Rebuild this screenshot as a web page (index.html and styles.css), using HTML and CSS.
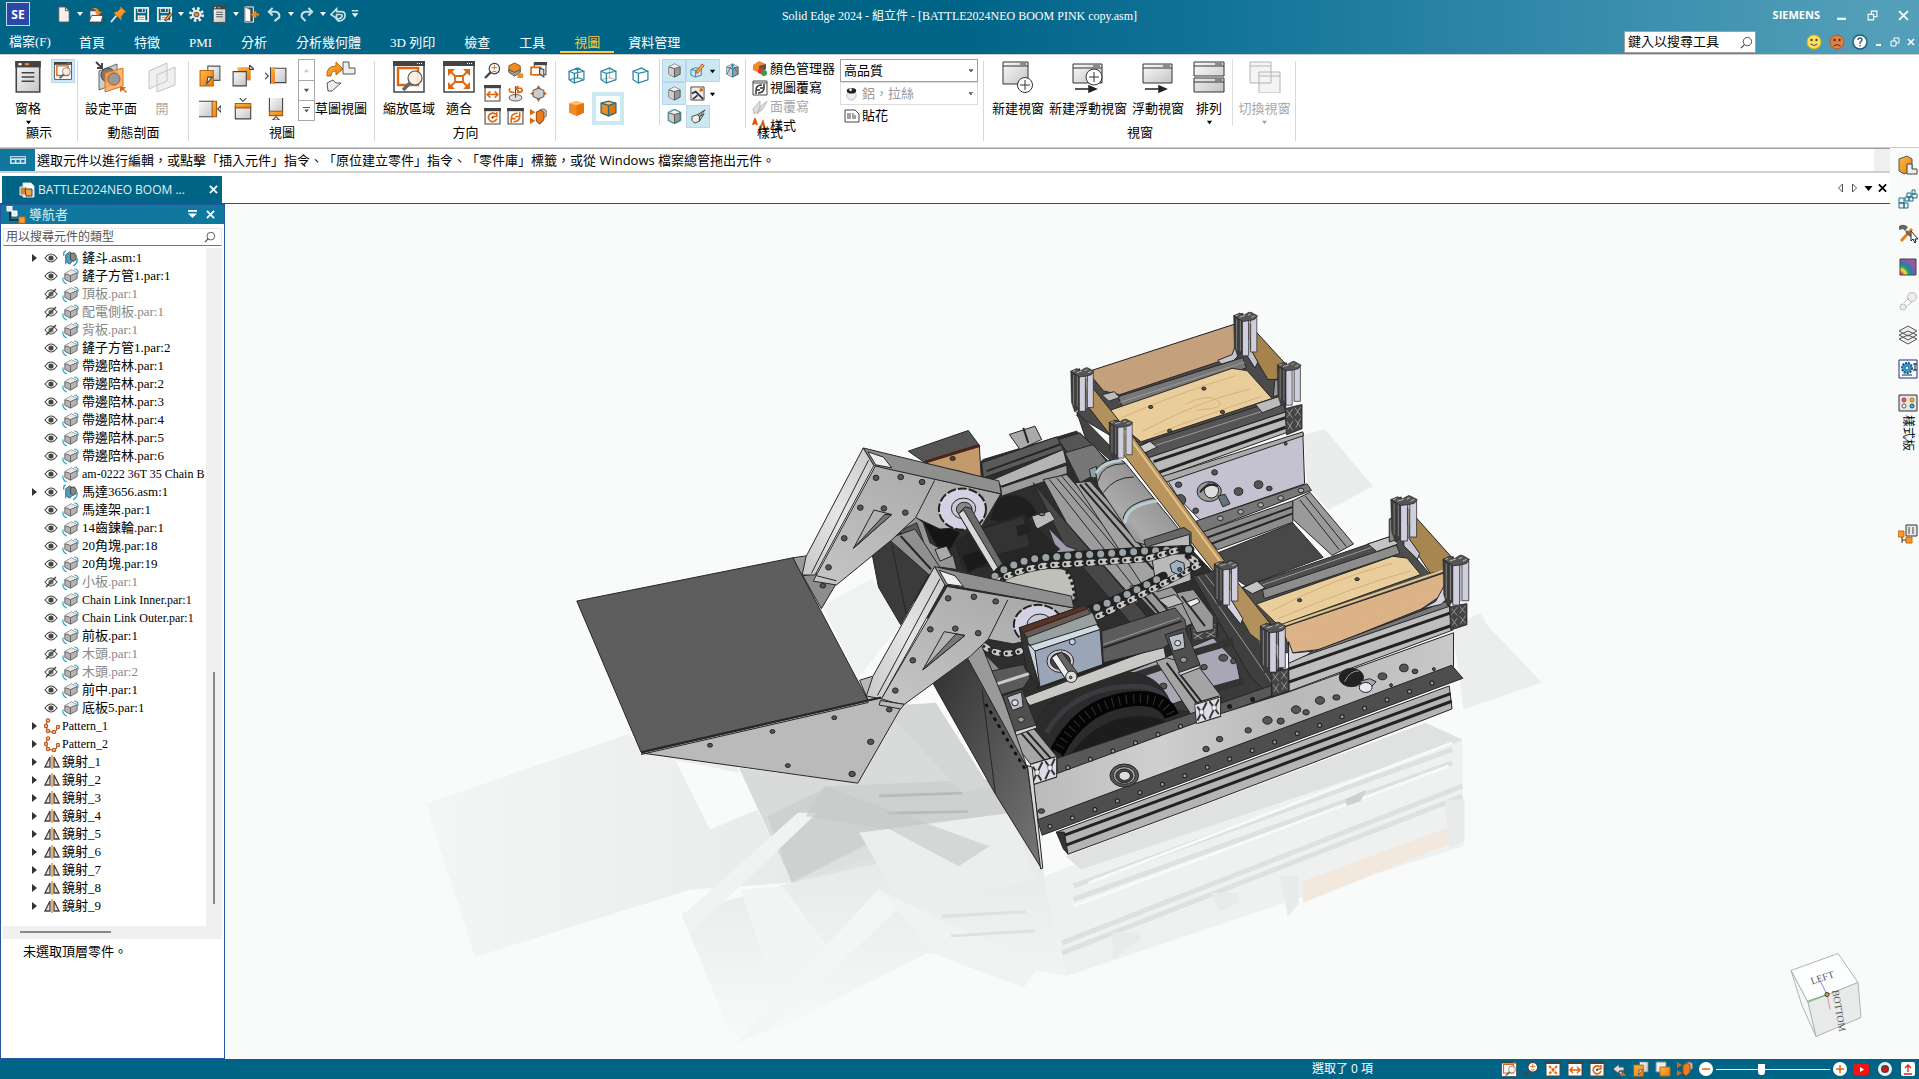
FILE: index.html
```
<!DOCTYPE html>
<html lang="zh-Hant">
<head>
<meta charset="UTF-8">
<meta name="viewport" content="width=device-width, initial-scale=1.0">
<title>Solid Edge 2024 - 組立件</title>
<link rel="stylesheet" href="styles.css">
</head>
<body>

<!-- shared icons -->
<svg class="defs" width="0" height="0">
    <defs>
        <linearGradient id="gOrange" x1="0" y1="0" x2="1" y2="1"><stop offset="0" stop-color="#ffb84a"/><stop offset="1" stop-color="#e87d0d"/></linearGradient>
        <linearGradient id="gGrey" x1="0" y1="0" x2="1" y2="1"><stop offset="0" stop-color="#fafafa"/><stop offset="1" stop-color="#c4c4c4"/></linearGradient>
        <linearGradient id="gFace" x1="0" y1="0" x2="1" y2="0"><stop offset="0" stop-color="#bababa"/><stop offset=".3" stop-color="#cfcfcf"/><stop offset=".6" stop-color="#b8b8b8"/><stop offset="1" stop-color="#c8c8c8"/></linearGradient>
        <linearGradient id="gArm" x1="0" y1="1" x2="1" y2="0"><stop offset="0" stop-color="#c6c6c6"/><stop offset="1" stop-color="#a4a4a4"/></linearGradient>
        <linearGradient id="gEdge" x1="0" y1="1" x2="1" y2="0"><stop offset="0" stop-color="#c8c8c8"/><stop offset=".5" stop-color="#e6e6e6"/><stop offset="1" stop-color="#cacaca"/></linearGradient>
        <linearGradient id="gDark" x1="0" y1="0" x2="1" y2="1"><stop offset="0" stop-color="#303030"/><stop offset="1" stop-color="#777"/></linearGradient>
        <linearGradient id="gMotor" x1="0" y1="1" x2="1" y2="0"><stop offset="0" stop-color="#555"/><stop offset=".35" stop-color="#aaa"/><stop offset=".6" stop-color="#999"/><stop offset="1" stop-color="#4c4c4c"/></linearGradient>
        <linearGradient id="gFade" x1="0" y1="0" x2="0" y2="1"><stop offset="0" stop-color="#dfe1e1"/><stop offset="1" stop-color="#f9fbfb"/></linearGradient>
        <linearGradient id="gFloor" x1="0" y1="0" x2="1" y2="0"><stop offset="0" stop-color="#f4f6f6"/><stop offset="1" stop-color="#e9ebeb"/></linearGradient>
        <radialGradient id="gHeat" cx="0" cy="1" r="1"><stop offset=".1" stop-color="#e33"/><stop offset=".35" stop-color="#fd4"/><stop offset=".55" stop-color="#2a9d5c"/><stop offset=".75" stop-color="#2a78c0"/><stop offset="1" stop-color="#945a9c"/></radialGradient>
    </defs>
    <symbol id="caret" viewBox="0 0 8 8"><path d="M1 2h6L4 6z" fill="currentColor"/></symbol>
    <symbol id="new" viewBox="0 0 18 18"><path d="M4 1h7l4 4v12H4z" fill="#f4f1ee" stroke="#555"/><path d="M11 1v4h4" fill="none" stroke="#555"/></symbol>
    <symbol id="open" viewBox="0 0 18 18"><path d="M3 17V5h8v4h5v8z" fill="#f4f1ee" stroke="#444"/><path d="M2 17l3-7h12l-2 7z" fill="#fff" stroke="#444"/><path d="M5 3q6-3 8 3h3l-4 4-4-4h2q-1-3-5-3z" fill="#f08a24"/></symbol>
    <symbol id="pin" viewBox="0 0 18 18"><path d="M1 17l6-7" stroke="#ddd" stroke-width="2"/><path d="M11 1l6 5-2 1-3 4v4L4 7l4-1 3-3z" fill="url(#gOrange)" stroke="#c46a10"/></symbol>
    <symbol id="save" viewBox="0 0 18 18"><path d="M2 2h14v14H2z" fill="none" stroke="#f1e9e2" stroke-width="2"/><path d="M5 2h8v5H5zM10 3v3" fill="none" stroke="#f1e9e2"/><path d="M5 10h8v6H5z" fill="#fff"/><path d="M6 12h6M6 14h6" stroke="#e87d0d"/></symbol>
    <symbol id="saveas" viewBox="0 0 18 18"><use href="#save"/><path d="M9 15l6-8 2 2-6 7z" fill="#f3a33a" stroke="#333"/></symbol>
    <symbol id="gear" viewBox="0 0 18 18"><circle cx="9" cy="9" r="6" fill="none" stroke="#eee" stroke-width="4" stroke-dasharray="2.4 2.3"/><circle cx="9" cy="9" r="4" fill="#555" stroke="#eee" stroke-width="2"/><circle cx="9" cy="9" r="2" fill="#f08a24"/></symbol>
    <symbol id="pane" viewBox="0 0 24 30"><path d="M1 1h22v28H1z" fill="url(#gGrey)" stroke="#444" stroke-width="1.5"/><path d="M0 0h24v6H0z" fill="#444"/><path d="M3 2h3v2H3z" fill="#fff"/><path d="M9 2h4v2H9z" fill="#f08a24"/><path d="M6 11h12M6 15h12M6 19h12" stroke="#444" stroke-width="1.5"/></symbol>
    <symbol id="exit" viewBox="0 0 18 18"><path d="M2 1h9v16H2z" fill="#444" stroke="#fff"/><path d="M2 1l6 3v13l-6-1z" fill="#fff" stroke="#777"/><path d="M17 9h-6m3-3l-4 3 4 3" fill="none" stroke="#f08a24" stroke-width="2"/></symbol>
    <symbol id="undo" viewBox="0 0 18 18"><path d="M3 6h7q5 1 4 6l-5 4M7 2L3 6l4 4" fill="none" stroke="#c8dde6" stroke-width="2.2"/></symbol>
    <symbol id="redo" viewBox="0 0 18 18"><path d="M15 6H8q-5 1-4 6l4 4M11 2l4 4-4 4" fill="none" stroke="#c8dde6" stroke-width="2.2"/></symbol>
    <symbol id="both" viewBox="0 0 18 18"><path d="M1 9l6-6v3h5q4 0 4 4 0 5-7 6l-2-2q6-1 6-4 0-1-2-1H7v4z" fill="none" stroke="#c8dde6" stroke-width="1.8"/></symbol>
    <symbol id="more" viewBox="0 0 8 10"><path d="M0 1h8" stroke="#fff" stroke-width="1.5"/><path d="M0 4h8L4 9z" fill="#fff"/></symbol>
    <symbol id="lens" viewBox="0 0 18 18"><circle cx="11" cy="7" r="5.500" fill="#fff" stroke="#444" stroke-width="1.3"/><path d="M7 11l-6 6" stroke="#444" stroke-width="2.4"/></symbol>
    <symbol id="find" viewBox="0 0 14 14"><circle cx="8" cy="6" r="4.500" fill="none" stroke="#444"/><path d="M5 9l-4 4" stroke="#444" stroke-width="1.3"/></symbol>
    <symbol id="winlens" viewBox="0 0 32 32"><path d="M1 1h30v30H1z" fill="#fff" stroke="#444" stroke-width="1.5"/><path d="M0 0h32v5H0z" fill="#444"/><path d="M24 2.500h5" stroke="#fff" stroke-dasharray="1 1"/><path d="M5 7h20v17H5z" fill="#fff" stroke="#e0660c" stroke-width="2.4"/><circle cx="22" cy="17" r="7" fill="#fdeee2" fill-opacity=".9" stroke="#555" stroke-width="1.2"/><path d="M17 22l-7 7" stroke="#666" stroke-width="3.500"/></symbol>
    <symbol id="fit" viewBox="0 0 32 32"><path d="M1 1h30v30H1z" fill="#fff" stroke="#444" stroke-width="1.5"/><path d="M0 0h32v5H0z" fill="#444"/><path d="M24 2.500h5" stroke="#fff" stroke-dasharray="1 1"/><path d="M12 15h8v6h-8zM12 15l-6-6M20 15l6-6M12 21l-6 6M20 21l6 6" fill="none" stroke="#e0660c" stroke-width="1.8"/><path d="M5 8h7l-7 7zM27 8h-7l7 7zM5 28h7l-7-7zM27 28h-7l7-7z" fill="#e0660c"/></symbol>
    <symbol id="zoom" viewBox="0 0 18 18"><use href="#lens"/><path d="M8 6h6M11 3v5M9 10h4" stroke="#e0660c"/></symbol>
    <symbol id="pan" viewBox="0 0 16 16"><path d="M1 1h14v14H1z" fill="#fff" stroke="#444"/><path d="M0 0h16v3H0z" fill="#444"/><path d="M3 9h10M6 6L3 9l3 3M10 6l3 3-3 3" fill="none" stroke="#e0660c" stroke-width="1.5"/></symbol>
    <symbol id="rot" viewBox="0 0 16 16"><path d="M1 1h14v14H1z" fill="#fff" stroke="#444"/><path d="M0 0h16v3H0z" fill="#444"/><path d="M11 6a4 4 0 1 0 1 4M12 4v4H8" fill="none" stroke="#e0660c" stroke-width="1.6"/><circle cx="8" cy="9" r="1" fill="#333"/></symbol>
    <symbol id="refresh" viewBox="0 0 16 16"><path d="M1 1h14v14H1z" fill="#fff" stroke="#444"/><path d="M0 0h16v3H0z" fill="#444"/><path d="M4 9q1-4 6-4M12 9q-1 4-6 4M12 4v4H8M4 14v-4h4" fill="none" stroke="#e0660c" stroke-width="1.5"/></symbol>
    <symbol id="override" viewBox="0 0 16 16"><path d="M1 1h14v14H1z" fill="#fff" stroke="#444"/><path d="M1 3h14" stroke="#444"/><path d="M4 9q1-4 6-4M12 9q-1 4-6 4M12 4v4H8M4 14v-4h4" fill="none" stroke="#333" stroke-width="1.5"/></symbol>
    <symbol id="smallfit" viewBox="0 0 16 16"><path d="M1 1h14v14H1z" fill="#fff" stroke="#444"/><path d="M0 0h16v3H0z" fill="#444"/><path d="M4 5l8 8M12 5l-8 8" stroke="#e0660c" stroke-width="2" stroke-dasharray="3 1"/></symbol>
    <symbol id="cube" viewBox="0 0 16 16"><path d="M2 4l6-3 6 3v8l-6 3-6-3z" fill="#999" stroke="#555"/><path d="M2 4l6-3 6 3-6 2z" fill="#eee"/><path d="M8 6v9l-6-3V4z" fill="#ccc"/><path d="M2 4l6 2 6-2M8 6v9" fill="none" stroke="#555"/></symbol>
    <symbol id="cubeglow" viewBox="0 0 16 16"><path d="M2 4l6-3 6 3v8l-6 3-6-3z" fill="none" stroke="#4cc4e4" stroke-width="3"/><use href="#cube"/></symbol>
    <symbol id="cubex" viewBox="0 0 16 16"><use href="#cube"/><path d="M2 12l6-11 6 11M8 1v14" fill="none" stroke="#2d86a6"/></symbol>
    <symbol id="cubetilt" viewBox="0 0 16 16"><path d="M1 8l6-2 2 2v5l-5 2-3-3z" fill="#eee" stroke="#444"/><path d="M7 6l8-5-6 7zM9 8l5-3-5 8z" fill="#bbb" stroke="#444"/></symbol>
    <symbol id="cubewire" viewBox="0 0 16 16"><path d="M1 4l5 2v9l-5-3zM6 6l9-2v8l-9 3M1 4l8-3 6 3M1 12l8-2 6 2M9 1v9" fill="none" stroke="#2d86a6" stroke-width="1.2"/></symbol>
    <symbol id="cubehid" viewBox="0 0 16 16"><path d="M9 1v9l6 2M9 10l-8 2" fill="none" stroke="#bbb"/><path d="M1 4l5 2v9l-5-3zM6 6l9-2v8l-9 3M1 4l8-3 6 3" fill="none" stroke="#2d86a6" stroke-width="1.2"/></symbol>
    <symbol id="cubeout" viewBox="0 0 16 16"><path d="M1 4l5 2v9l-5-3zM6 6l9-2v8l-9 3M1 4l8-3 6 3" fill="#fff" stroke="#2d86a6" stroke-width="1.2"/></symbol>
    <symbol id="cubeor" viewBox="0 0 16 16"><path d="M1 3l7-2 7 2v9l-7 3-7-3z" fill="#f08a24"/><path d="M1 3l7-2 7 2-7 2z" fill="#ffc266"/><path d="M8 5v10l7-3V3z" fill="#e0760c"/></symbol>
    <symbol id="cubeedge" viewBox="0 0 16 16"><use href="#cubeor"/><path d="M1 3l7-2 7 2v9l-7 3-7-3zM1 3l7 2 7-2M8 5v10" fill="none" stroke="#2d6b7c" stroke-width="1.2"/></symbol>
    <symbol id="cubeor2" viewBox="0 0 18 18"><path d="M2 4l6-3 6 3v6l-6 3-6-3z" fill="#f08a24" stroke="#8a5a20"/><path d="M2 8l6 3 6-3v3l-6 4-6-4z" fill="#999" stroke="#555"/><path d="M11 12h6v5h-6z" fill="#f08a24"/></symbol>
    <symbol id="wincopy" viewBox="0 0 16 16"><path d="M4 1h11v11H4z" fill="#fff" stroke="#444"/><path d="M4 0h12v3H4z" fill="#444"/><path d="M1 5h9v7H1z" fill="#fff" stroke="#e0660c" stroke-width="1.6"/><path d="M9 6l4 1v7l-4-3z" fill="#ddd" stroke="#444"/></symbol>
    <symbol id="spin" viewBox="0 0 16 16"><ellipse cx="8" cy="12" rx="6" ry="3" fill="#ddd" stroke="#666"/><path d="M8 1v11" stroke="#444"/><path d="M3 3q-3 4 4 4M9 7q8 0 4-4H9M11 1L8 3l3 3" fill="none" stroke="#e0660c" stroke-width="1.5"/></symbol>
    <symbol id="look" viewBox="0 0 16 16"><path d="M8 0l2 3H6zM8 16l2-3H6zM0 8l3-2v4zM16 8l-3-2v4z" fill="#e0660c"/><path d="M3 5l5-2 5 2v6l-5 2-5-2z" fill="#ccc" stroke="#666"/></symbol>
    <symbol id="persp" viewBox="0 0 16 16"><path d="M0 1l5 3-5 3zM0 9l5 3-5 3z" fill="#e0660c"/><circle cx="12" cy="5" r="4" fill="#bbb" stroke="#777"/><path d="M6 4l4-2 3 2v7l-4 4-3-3z" fill="#ee7b1e" stroke="#9a5316"/></symbol>
    <symbol id="v1" viewBox="0 0 20 20"><path d="M8 1h11v13H8z" fill="url(#gGrey)" stroke="#555"/><path d="M1 5h12v14H1z" fill="url(#gOrange)" stroke="#b9660e"/><path d="M8 11h4l-5 6z" fill="#fff" stroke="#444"/></symbol>
    <symbol id="v2" viewBox="0 0 20 20"><path d="M5 2h12v12H5z" fill="url(#gOrange)"/><path d="M1 6h12v13H1z" fill="url(#gGrey)" stroke="#444"/><path d="M16 0l4 4h-4z" fill="#fff" stroke="#444"/></symbol>
    <symbol id="v3" viewBox="0 0 20 20"><path d="M7 3h12v13H7z" fill="url(#gGrey)" stroke="#444"/><path d="M5 2h4v15H5z" fill="url(#gOrange)"/><path d="M5 2v15M0 7l3 3-3 3" fill="none" stroke="#444"/></symbol>
    <symbol id="v4" viewBox="0 0 20 20"><path d="M0 3h13v14H0z" fill="url(#gGrey)"/><path d="M0 3h13M0 17h13" stroke="#444"/><path d="M12 3h4v14h-4z" fill="url(#gOrange)" stroke="#a35c10"/><path d="M20 7l-3 3 3 3z" fill="#fff" stroke="#444"/></symbol>
    <symbol id="v5" viewBox="0 0 20 20"><path d="M3 8h14v11H3z" fill="url(#gGrey)" stroke="#444"/><path d="M3 5h14v4H3z" fill="url(#gOrange)" stroke="#a35c10"/><path d="M7 0l3 3 3-3" fill="none" stroke="#444"/></symbol>
    <symbol id="v6" viewBox="0 0 20 20"><path d="M4 0h12v13H4z" fill="url(#gGrey)"/><path d="M4 0v13M16 0v13" stroke="#444"/><path d="M4 12h12v4H4z" fill="url(#gOrange)" stroke="#a35c10"/><path d="M7 20l3-3 3 3z" fill="#fff" stroke="#444"/></symbol>
    <symbol id="draft" viewBox="0 0 32 32"><path d="M2 15Q1 5 11 5V1l7 7-7 6v-4q-5 0-5 5z" fill="url(#gOrange)" stroke="#b9660e"/><path d="M18 1h6v6h6v6H18zM2 22l6-3 3 3h5l-9 8H3z" fill="#eee" stroke="#555"/></symbol>
    <symbol id="setplane" viewBox="0 0 32 32"><path d="M4 10l18-7v19L4 29z" fill="#ccc" stroke="#666"/><circle cx="13" cy="14" r="7" fill="#777" stroke="#444"/><path d="M10 12l18-5v18l-18 6z" fill="#f6a860" fill-opacity=".85" stroke="#e0760c"/><circle cx="19" cy="18" r="6" fill="#999" stroke="#ae5a10"/><path d="M1 1l5 5M7 2v5H2" fill="none" stroke="#444" stroke-width="2"/><path d="M25 26h6l-2 2 3 3-1 1-3-3-3 2z" fill="#e0660c"/></symbol>
    <symbol id="planeoff" viewBox="0 0 32 32"><path d="M3 10l18-8v18L3 28zM11 14l18-8v18l-18 7z" fill="#efefef" stroke="#c4c4c4"/></symbol>
    <symbol id="winadd" viewBox="0 0 32 32"><path d="M1 1h25v22H1z" fill="url(#gGrey)" stroke="#333"/><path d="M1 5h25M18 3h6" stroke="#333"/><circle cx="23" cy="24" r="7.500" fill="#fff" stroke="#333"/><path d="M18 24h10M23 19v10" stroke="#333"/></symbol>
    <symbol id="winaddf" viewBox="0 0 32 32"><path d="M1 3h29v19H1z" fill="url(#gGrey)" stroke="#333"/><path d="M1 7h29M21 5h7" stroke="#333"/><circle cx="22" cy="16" r="8" fill="#fff" stroke="#333"/><path d="M17 16h10M22 11v10" stroke="#333"/><path d="M3 28h17M17 25l7 3-7 3z" fill="#222" stroke="#222" stroke-width="1.5"/></symbol>
    <symbol id="winfloat" viewBox="0 0 32 32"><path d="M1 3h29v19H1z" fill="url(#gGrey)" stroke="#333"/><path d="M1 7h29M21 5h7" stroke="#333"/><path d="M3 28h17M17 25l7 3-7 3z" fill="#222" stroke="#222" stroke-width="1.5"/></symbol>
    <symbol id="tile" viewBox="0 0 32 32"><path d="M1 1h30v14H1zM1 17h30v14H1z" fill="url(#gGrey)" stroke="#333"/><path d="M1 5h30M1 21h30M22 3h7M22 19h7" stroke="#333"/></symbol>
    <symbol id="cascade" viewBox="0 0 32 32"><path d="M1 1h21v21H1zM10 11h21v21H10z" fill="#f4f4f4" stroke="#b4b4b4"/><path d="M1 5h21M10 15h21" stroke="#b4b4b4"/></symbol>
    <symbol id="paint" viewBox="0 0 16 16"><path d="M1 7l5-2 6 1v7l-6 2-5-2zM6 8v7M1 7l5 1 6-2" fill="none" stroke="#2d86a6"/><path d="M6 10L13 1l2 2-7 8z" fill="#f3c23a" stroke="#c33"/></symbol>
    <symbol id="scene" viewBox="0 0 16 16"><path d="M1 1h14v14H1z" fill="#eee" stroke="#444"/><path d="M2 8l4-2 3 3 5 5M3 14l5-4" stroke="#333" stroke-width="2" fill="none"/><circle cx="12" cy="4" r="2" fill="#e0660c"/></symbol>
    <symbol id="palette" viewBox="0 0 16 16"><path d="M1 4l6-4 7 3v5l-7 4-6-3z" fill="#f08a24"/><path d="M7 5v7l7-4V3z" fill="#555"/><circle cx="9" cy="10" r="3" fill="#d33"/><circle cx="12" cy="12" r="3" fill="#3a9d4c"/></symbol>
    <symbol id="brush" viewBox="0 0 16 16"><path d="M1 10l7-8v9l-6 4zM8 8l7-6-4 8-6 5z" fill="#ddd" stroke="#bbb"/></symbol>
    <symbol id="styleA" viewBox="0 0 16 16"><path d="M6 15l5-11 3 11M7 11h6M1 7l2-6 2 6M2 5h3" fill="none" stroke="#e0560c" stroke-width="2"/></symbol>
    <symbol id="decal" viewBox="0 0 16 14"><path d="M1 1h10l4 4v8H1z" fill="#fff" stroke="#444"/><path d="M4 4v6M6 4v6M9 4v6M11 6v4" stroke="#444"/></symbol>
    <symbol id="mat" viewBox="0 0 16 16"><circle cx="8" cy="10" r="5" fill="#eee" stroke="#bbb"/><ellipse cx="8" cy="5" rx="5" ry="3" fill="#222"/><circle cx="7" cy="4" r="1.500" fill="#eee"/></symbol>
    <symbol id="eye" viewBox="0 0 14 12"><path d="M1 6q6-8 12 0-6 8-12 0z" fill="#fff" stroke="#444" stroke-width="1.2"/><circle cx="7" cy="6" r="2.600" fill="#444"/></symbol>
    <symbol id="eyeoff" viewBox="0 0 14 12"><path d="M1 6q6-8 12 0-6 8-12 0z" fill="#fff" stroke="#555" stroke-width="1.2"/><circle cx="7" cy="6" r="2.600" fill="#777"/><path d="M2 11L12 1" stroke="#444" stroke-width="1.5"/></symbol>
    <symbol id="part" viewBox="0 0 18 18"><path d="M3 6l7-4 6 3v6l-7 4-6-3z" fill="#b4b4b4" stroke="#666"/><path d="M3 6l7-4 6 3-7 3z" fill="#e8e8e8"/><path d="M9 8v7M3 6l6 2 7-3" fill="none" stroke="#666"/><path d="M1 10v3q1 3 4 4M13 1q3 0 4 3v2" fill="none" stroke="#19a5c8" stroke-width="1.2"/></symbol>
    <symbol id="asm" viewBox="0 0 18 18"><path d="M4 5l4-3 3 2v8l-3 3-4-3z" fill="#4b9fc0" stroke="#555"/><path d="M9 4l4-1 2 3v4l-3 2-3-2z" fill="#888" stroke="#444"/><path d="M4 1Q1 2 2 6M16 9q1 4-4 8M4 11v4" fill="none" stroke="#19a5c8" stroke-width="1.5"/></symbol>
    <symbol id="pattern" viewBox="0 0 16 16"><path d="M4 2Q1 6 3 11q4 5 9 2l2-5" fill="none" stroke="#555"/><g fill="#f6c58c" stroke="#c9571a" stroke-width="1.2"><circle cx="4" cy="2.500" r="1.700"/><circle cx="2" cy="8" r="1.700"/><circle cx="4" cy="13" r="1.700"/><circle cx="10" cy="14" r="1.700"/><circle cx="14" cy="9" r="1.700"/></g></symbol>
    <symbol id="mirror" viewBox="0 0 16 16"><path d="M6 3v10H1zM10 3v10h5z" fill="#e4e4e4" stroke="#444" stroke-width="1.3"/><path d="M8 1v14" stroke="#e0760c" stroke-width="1.2"/></symbol>
    <symbol id="tree" viewBox="0 0 20 18"><path d="M4 5v9h10M4 8h5" fill="none" stroke="#222" stroke-width="1.5"/><path d="M1 0h5v5H1zM6 5h5v5H6z" fill="#e8eef0" stroke="#fff"/><path d="M13 11h6v6h-6z" fill="#f6a23a" stroke="#e0660c"/></symbol>
    <symbol id="asmdoc" viewBox="0 0 16 16"><path d="M4 1h8l3 3v11H4z" fill="#fff" stroke="#ddd"/><path d="M1 5h7v8H1z" fill="#c98a3a" stroke="#eee"/><path d="M6 7h7v7H7z" fill="#f6a23a" stroke="#345"/></symbol>
    <symbol id="post" viewBox="0 0 75 130" preserveAspectRatio="none"><path d="M2 12L30 4V118L14 130 4 100z" fill="#3c3c3c" stroke="#222"/><path d="M28 22h18v105H28zM52 16h18v100H52z" fill="#cfcedd" stroke="#222" stroke-width="2"/><path d="M22 24v90M49 20v98M11 22v88" stroke="#999" stroke-width="2"/><path d="M2 12L20 4l12 6L50 0l22 12-8 10-16 4-20 2z" fill="#555" stroke="#222" stroke-width="2"/><path d="M8 12l8-3M20 16l16-5M44 10l8-3M54 16l10-4" stroke="#ddd" stroke-width="2"/></symbol>
    <symbol id="exend" viewBox="0 0 60 50" preserveAspectRatio="none"><path d="M0 14L56 0v36L4 50z" fill="#dcdbe6" stroke="#222" stroke-width="2"/><path d="M6 18l18 24M26 10L6 44M32 8l20 24M52 4L32 40" stroke="#333" stroke-width="4"/><circle cx="15" cy="28" r="5" fill="#eee" stroke="#222"/><circle cx="42" cy="20" r="5" fill="#eee" stroke="#222"/></symbol>
    <symbol id="exdark" viewBox="0 0 50 70" preserveAspectRatio="none"><path d="M0 10L48 0v56L4 70z" fill="#444" stroke="#222" stroke-width="2"/><path d="M6 14l16 18M22 10L6 30M28 8l16 18M44 6L28 26M6 40l16 20M22 38L8 58M28 34l16 18M44 32L30 54" stroke="#aaa" stroke-width="2"/></symbol>
</svg>

<header class="titlebar">
    <div class="quick">
        <span class="logo">SE</span>
        <button title="新建"><svg><use href="#new"/></svg></button><button class="drop"><svg><use href="#caret"/></svg></button>
        <button title="開啟"><svg><use href="#open"/></svg></button>
        <button><svg><use href="#pin"/></svg></button>
        <button title="儲存"><svg><use href="#save"/></svg></button>
        <button><svg><use href="#saveas"/></svg></button><button class="drop"><svg><use href="#caret"/></svg></button>
        <button><svg><use href="#gear"/></svg></button>
        <button><svg><use href="#pane"/></svg></button><button class="drop"><svg><use href="#caret"/></svg></button>
        <button><svg><use href="#exit"/></svg></button>
        <button title="復原"><svg><use href="#undo"/></svg></button><button class="drop"><svg><use href="#caret"/></svg></button>
        <button title="取消復原"><svg><use href="#redo"/></svg></button><button class="drop"><svg><use href="#caret"/></svg></button>
        <button><svg><use href="#both"/></svg></button><button class="drop"><svg><use href="#more"/></svg></button>
    </div>
    <h1>Solid Edge 2024 - 組立件 - [BATTLE2024NEO BOOM PINK copy.asm]</h1>
    <div class="window-buttons">
        <span class="brand">SIEMENS</span>
        <button><svg viewBox="0 0 10 10"><path d="M1 8h8" stroke="#fff" stroke-width="2"/></svg></button>
        <button><svg viewBox="0 0 10 10"><path d="M1 4h5v5H1zM4 4V1h5v5H6" fill="none" stroke="#fff"/></svg></button>
        <button><svg viewBox="0 0 10 10"><path d="M1 1l8 8M9 1L1 9" stroke="#fff" stroke-width="1.5"/></svg></button>
    </div>
</header>

<nav class="tabs">
    <a href="#" class="file">檔案(F)</a>
    <a href="#">首頁</a>
    <a href="#">特徵</a>
    <a href="#">PMI</a>
    <a href="#">分析</a>
    <a href="#">分析幾何體</a>
    <a href="#">3D 列印</a>
    <a href="#">檢查</a>
    <a href="#">工具</a>
    <a href="#" class="active">視圖</a>
    <a href="#">資料管理</a>
    <div class="tabs-right">
        <label class="tool-search"><input type="text" placeholder="鍵入以搜尋工具" aria-label="搜尋工具"><svg><use href="#find"/></svg></label>
        <button class="face"><svg viewBox="0 0 16 16"><circle cx="8" cy="8" r="7" fill="#ffe066" stroke="#d9b400"/><circle cx="5.500" cy="6" r="1.200" fill="#543"/><circle cx="10.500" cy="6" r="1.200" fill="#543"/><path d="M4.500 10q3.500 3 7 0" fill="none" stroke="#543"/></svg></button>
        <button class="face"><svg viewBox="0 0 16 16"><circle cx="8" cy="8" r="7" fill="#e08040" stroke="#b85a20"/><circle cx="5.500" cy="6" r="1.200" fill="#432"/><circle cx="10.500" cy="6" r="1.200" fill="#432"/><path d="M4.500 12q3.500-3 7 0" fill="none" stroke="#432"/></svg></button>
        <button class="face help"><svg viewBox="0 0 16 16"><circle cx="8" cy="8" r="7" fill="#fff" stroke="#1b5f7c" stroke-width="1.5"/><path d="M6 6q0-2 2-2t2 2q0 1-2 2.500V10M8 11v1.500" fill="none" stroke="#1b5f7c" stroke-width="1.3"/></svg></button>
        <button><svg viewBox="0 0 10 10"><path d="M2 8h5" stroke="#fff" stroke-width="2"/></svg></button>
        <button><svg viewBox="0 0 10 10"><path d="M1 4h5v5H1zM4 4V1h5v5H6" fill="none" stroke="#fff"/></svg></button>
        <button><svg viewBox="0 0 10 10"><path d="M2 2l6 6M8 2L2 8" stroke="#fff" stroke-width="1.5"/></svg></button>
    </div>
</nav>

<section class="ribbon">
    <div class="group g-show">
        <div class="body">
            <button class="big"><svg><use href="#pane"/></svg>窗格<svg class="dd"><use href="#caret"/></svg></button>
            <button class="small on"><svg><use href="#winlens"/></svg></button>
        </div>
        <h2>顯示</h2>
    </div>
    <div class="group g-clip">
        <div class="body">
            <button class="big"><svg><use href="#setplane"/></svg>設定平面</button>
            <button class="big" disabled><svg><use href="#planeoff"/></svg>開</button>
        </div>
        <h2>動態剖面</h2>
    </div>
    <div class="group g-views">
        <div class="body">
            <div class="gallery">
                <button><svg><use href="#v1"/></svg></button>
                <button><svg><use href="#v2"/></svg></button>
                <button><svg><use href="#v3"/></svg></button>
                <button><svg><use href="#v4"/></svg></button>
                <button><svg><use href="#v5"/></svg></button>
                <button><svg><use href="#v6"/></svg></button>
            </div>
            <div class="scroller">
                <button class="up" disabled><svg><use href="#caret"/></svg></button>
                <button><svg><use href="#caret"/></svg></button>
                <button class="bar"><svg><use href="#caret"/></svg></button>
            </div>
            <button class="big"><svg><use href="#draft"/></svg>草圖視圖</button>
        </div>
        <h2>視圖</h2>
    </div>
    <div class="group g-orient">
        <div class="body">
            <button class="big"><svg><use href="#winlens"/></svg>縮放區域</button>
            <button class="big"><svg><use href="#fit"/></svg>適合</button>
            <div class="grid">
                <button><svg><use href="#zoom"/></svg></button>
                <button><svg><use href="#cubeor2"/></svg></button>
                <button><svg><use href="#wincopy"/></svg></button>
                <button><svg><use href="#pan"/></svg></button>
                <button><svg><use href="#spin"/></svg></button>
                <button><svg><use href="#look"/></svg></button>
                <button><svg><use href="#rot"/></svg></button>
                <button><svg><use href="#refresh"/></svg></button>
                <button><svg><use href="#persp"/></svg></button>
            </div>
        </div>
        <h2>方向</h2>
    </div>
    <div class="group g-style">
        <div class="body">
            <div class="gallery cubes">
                <button><svg><use href="#cubewire"/></svg></button>
                <button><svg><use href="#cubehid"/></svg></button>
                <button><svg><use href="#cubeout"/></svg></button>
                <button><svg><use href="#cubeor"/></svg></button>
                <button class="picked"><svg><use href="#cubeedge"/></svg></button>
            </div>
            <div class="grid shading">
                <button class="on"><svg><use href="#cube"/></svg></button>
                <button class="on wide"><svg><use href="#paint"/></svg><svg class="dd"><use href="#caret"/></svg></button>
                <button><svg><use href="#cubex"/></svg></button>
                <button class="on"><svg><use href="#cube"/></svg></button>
                <button class="wide"><svg><use href="#scene"/></svg><svg class="dd"><use href="#caret"/></svg></button>
                <span></span>
                <button><svg><use href="#cubeglow"/></svg></button>
                <button class="on"><svg><use href="#cubetilt"/></svg></button>
            </div>
            <div class="rows">
                <button><svg><use href="#palette"/></svg>顏色管理器</button>
                <button><svg><use href="#override"/></svg>視圖覆寫</button>
                <button disabled><svg><use href="#brush"/></svg>面覆寫</button>
                <button><svg><use href="#styleA"/></svg>樣式</button>
            </div>
            <div class="picks">
                <div class="pick"><select aria-label="品質"><option>高品質</option></select></div>
                <div class="pick off"><svg><use href="#mat"/></svg><select aria-label="材質" disabled><option>鋁，拉絲</option></select></div>
                <button><svg><use href="#decal"/></svg>貼花</button>
            </div>
        </div>
        <h2>樣式</h2>
    </div>
    <div class="group g-window">
        <div class="body">
            <button class="big"><svg><use href="#winadd"/></svg>新建視窗</button>
            <button class="big"><svg><use href="#winaddf"/></svg>新建浮動視窗</button>
            <button class="big"><svg><use href="#winfloat"/></svg>浮動視窗</button>
            <button class="big"><svg><use href="#tile"/></svg>排列<svg class="dd"><use href="#caret"/></svg></button>
            <button class="big last" disabled><svg><use href="#cascade"/></svg>切換視窗<svg class="dd"><use href="#caret"/></svg></button>
        </div>
        <h2>視窗</h2>
    </div>
</section>

<main class="work">
    <div class="desk">
        <div class="prompt">
            <button><svg viewBox="0 0 20 10"><path d="M0 0h20v10H0z" fill="#cfe4ec"/><path d="M1 1h18v2H1z" fill="#3c8fb0"/><path d="M2 5h4v3H2zM8 5h4v3H8zM14 5h4v3h-4z" fill="#10789c"/></svg></button>
            <p>選取元件以進行編輯，或點擊「插入元件」指令、「原位建立零件」指令、「零件庫」標籤，或從 Windows 檔案總管拖出元件。</p>
            <span class="grip"></span>
        </div>
        <div class="docs">
            <div class="doc-tab"><svg><use href="#asmdoc"/></svg><span>BATTLE2024NEO BOOM ...</span><button><svg viewBox="0 0 10 10"><path d="M1 1l8 8M9 1L1 9" stroke="#fff" stroke-width="2"/></svg></button></div>
            <div class="doc-nav">
                <button><svg viewBox="0 0 8 10"><path d="M6 1L2 5l4 4z" fill="none" stroke="#555"/></svg></button>
                <button><svg viewBox="0 0 8 10"><path d="M2 1l4 4-4 4z" fill="none" stroke="#555"/></svg></button>
                <button><svg viewBox="0 0 8 10"><path d="M0 3h8L4 8z"/></svg></button>
                <button><svg viewBox="0 0 10 10"><path d="M1 1l8 8M9 1L1 9" stroke="#000" stroke-width="2"/></svg></button>
            </div>
        </div>
        <div class="content">
            <aside class="navigator">
                <header>
                    <svg><use href="#tree"/></svg><h3>導航者</h3>
                    <button><svg viewBox="0 0 10 10"><path d="M0 1h10" stroke="#fff" stroke-width="2"/><path d="M0 4h10L5 9z" fill="#fff"/></svg></button>
                    <button><svg viewBox="0 0 10 10"><path d="M1 1l8 8M9 1L1 9" stroke="#fff" stroke-width="2"/></svg></button>
                </header>
                <label class="part-search"><input type="text" placeholder="用以搜尋元件的類型" aria-label="搜尋元件"><svg><use href="#find"/></svg></label>
                <div class="tree-box">
                    <ul class="tree">
                        <li class="fold"><svg><use href="#eye"/></svg><svg class="ic"><use href="#asm"/></svg>鏟斗.asm:1</li>
                        <li><svg><use href="#eye"/></svg><svg class="ic"><use href="#part"/></svg>鏟子方管1.par:1</li>
                        <li class="off"><svg><use href="#eyeoff"/></svg><svg class="ic"><use href="#part"/></svg>頂板.par:1</li>
                        <li class="off"><svg><use href="#eyeoff"/></svg><svg class="ic"><use href="#part"/></svg>配電側板.par:1</li>
                        <li class="off"><svg><use href="#eyeoff"/></svg><svg class="ic"><use href="#part"/></svg>背板.par:1</li>
                        <li><svg><use href="#eye"/></svg><svg class="ic"><use href="#part"/></svg>鏟子方管1.par:2</li>
                        <li><svg><use href="#eye"/></svg><svg class="ic"><use href="#part"/></svg>帶邊陪林.par:1</li>
                        <li><svg><use href="#eye"/></svg><svg class="ic"><use href="#part"/></svg>帶邊陪林.par:2</li>
                        <li><svg><use href="#eye"/></svg><svg class="ic"><use href="#part"/></svg>帶邊陪林.par:3</li>
                        <li><svg><use href="#eye"/></svg><svg class="ic"><use href="#part"/></svg>帶邊陪林.par:4</li>
                        <li><svg><use href="#eye"/></svg><svg class="ic"><use href="#part"/></svg>帶邊陪林.par:5</li>
                        <li><svg><use href="#eye"/></svg><svg class="ic"><use href="#part"/></svg>帶邊陪林.par:6</li>
                        <li class="latin"><svg><use href="#eye"/></svg><svg class="ic"><use href="#part"/></svg>am-0222 36T 35 Chain B</li>
                        <li class="fold"><svg><use href="#eye"/></svg><svg class="ic"><use href="#asm"/></svg>馬達3656.asm:1</li>
                        <li><svg><use href="#eye"/></svg><svg class="ic"><use href="#part"/></svg>馬達架.par:1</li>
                        <li><svg><use href="#eye"/></svg><svg class="ic"><use href="#part"/></svg>14齒鍊輪.par:1</li>
                        <li><svg><use href="#eye"/></svg><svg class="ic"><use href="#part"/></svg>20角塊.par:18</li>
                        <li><svg><use href="#eye"/></svg><svg class="ic"><use href="#part"/></svg>20角塊.par:19</li>
                        <li class="off"><svg><use href="#eyeoff"/></svg><svg class="ic"><use href="#part"/></svg>小板.par:1</li>
                        <li class="latin"><svg><use href="#eye"/></svg><svg class="ic"><use href="#part"/></svg>Chain Link Inner.par:1</li>
                        <li class="latin"><svg><use href="#eye"/></svg><svg class="ic"><use href="#part"/></svg>Chain Link Outer.par:1</li>
                        <li><svg><use href="#eye"/></svg><svg class="ic"><use href="#part"/></svg>前板.par:1</li>
                        <li class="off"><svg><use href="#eyeoff"/></svg><svg class="ic"><use href="#part"/></svg>木頭.par:1</li>
                        <li class="off"><svg><use href="#eyeoff"/></svg><svg class="ic"><use href="#part"/></svg>木頭.par:2</li>
                        <li><svg><use href="#eye"/></svg><svg class="ic"><use href="#part"/></svg>前中.par:1</li>
                        <li><svg><use href="#eye"/></svg><svg class="ic"><use href="#part"/></svg>底板5.par:1</li>
                        <li class="fold latin"><svg class="ic"><use href="#pattern"/></svg>Pattern_1</li>
                        <li class="fold latin"><svg class="ic"><use href="#pattern"/></svg>Pattern_2</li>
                        <li class="fold"><svg class="ic"><use href="#mirror"/></svg>鏡射_1</li>
                        <li class="fold"><svg class="ic"><use href="#mirror"/></svg>鏡射_2</li>
                        <li class="fold"><svg class="ic"><use href="#mirror"/></svg>鏡射_3</li>
                        <li class="fold"><svg class="ic"><use href="#mirror"/></svg>鏡射_4</li>
                        <li class="fold"><svg class="ic"><use href="#mirror"/></svg>鏡射_5</li>
                        <li class="fold"><svg class="ic"><use href="#mirror"/></svg>鏡射_6</li>
                        <li class="fold"><svg class="ic"><use href="#mirror"/></svg>鏡射_7</li>
                        <li class="fold"><svg class="ic"><use href="#mirror"/></svg>鏡射_8</li>
                        <li class="fold"><svg class="ic"><use href="#mirror"/></svg>鏡射_9</li>
                    </ul>
                    <div class="vbar"><span></span></div>
                </div>
                <div class="hbar"><span></span></div>
                <p class="note">未選取頂層零件。</p>
            </aside>
            <div class="viewport">
<svg class="model" viewBox="225 205 1665 854" preserveAspectRatio="xMidYMid meet">
    <!-- floor shadows and reflections -->
    <g class="soft" transform="translate(400 600) scale(.7653 .3333)">
        <path d="M34 612L298 404 330 462 440 500 512 850 380 870 98 1072z" fill="url(#gFloor)"/>
        <path d="M360 482L445 520 510 590 405 690z" fill="#f9fbfb"/>
        <path d="M443 505L598 550 660 300 735 560 780 545 800 700 512 850z" fill="#d9dbdb"/>
        <path d="M480 650L560 560 770 540 835 620 512 850z" fill="#cfd1d1"/>
        <path d="M368 942L512 850 640 700 810 700 840 810 870 1130 690 1060 440 1350z" fill="url(#gFade)" opacity=".75"/>
        <path d="M652 905L600 700 800 640 830 845z" fill="#eceeee"/>
        <path d="M445 870L500 860 570 1080 490 1170z" fill="#f3f5f5"/>
        <path d="M370 945L520 640 545 640 380 1000z" fill="#f1f3f3"/>
        <path d="M440 1330L625 870 660 910 480 1290z" fill="#f4f6f6"/>
        <path d="M625 870L835 1100 815 1165 700 1065z" fill="#f1f3f3"/>
        <path d="M708 945l110-12v8l-110 15zM720 1005l110-15v8l-110 15z" fill="#dfe1e1"/>
        <path d="M625 585l110-8v8l-108 9zM636 637l106-5v8l-104 6z" fill="#b9bbbb"/>
        <path d="M530 650L555 560 770 740 730 800 640 690z" fill="#c6c8c8" opacity=".6"/>
        <path d="M630 320L700 310 770 560 735 580z" fill="#d4d6d6"/>
        <path d="M632 10L655 80 648 90z" fill="#cfd1d1"/>
        <path d="M1375 85L1412 40 1420 75 1478 215 1492 248 1390 330z" fill="#eceeee"/>
        <path d="M842 830L1350 380 1388 420 1390 740 1170 900 870 1130z" fill="#eff1f1"/>
        <path d="M870 770L1340 370 1388 420 1370 440 890 810z" fill="#e0e2e2"/>
        <path class="band" d="M880 860L1375 450M880 900L1375 490M865 1030L1388 560M865 1060L1388 590"/>
        <path class="gleam" d="M880 920L1370 500M900 850L1375 430"/>
        <path d="M1235 600l28-30-8 35-18 14z" fill="#cfd1d1"/>
        <path d="M1180 845L1368 685 1370 735 1180 910z" fill="#f3e8de"/>
        <path d="M1365 600h26v125l-20 20zM1150 830h24v85l-14 35zM1060 880h36v30l-26 25zM930 1000h38v20l-36 60z" fill="#e9eaec"/>
    </g>
    <g class="soft" transform="translate(1000 290) scale(.3571 .38265)">
        <path d="M850 380L910 365 1045 515 920 575 860 515z" fill="#ebeded"/>
    </g>
    <g class="soft" transform="translate(540 300) scale(.3571 .38265)">
        <path d="M790 800L930 730 1010 850 890 990z" fill="#f0f2f2"/>
    </g>

    <!-- chassis floor and rear beams -->
    <g transform="translate(880 400) scale(.3333)">
        <path d="M0 430L120 350 310 180 590 95 700 200 1000 520 1080 700 1140 880 1000 930 540 1080 330 900 100 600z" fill="#2e2e2e"/>
        <path d="M85 155L265 93 300 140 135 190z" fill="#555"/><path d="M135 190L298 138 304 235 240 215 160 200z" fill="#c39a6c"/><path d="M135 188L298 138" class="brown"/>
        <ellipse cx="218" cy="177" rx="8" ry="6" fill="#543"/>
        <path d="M388 105L465 80 485 120 420 150z" fill="#aaa"/><path d="M430 85L445 130" class="thick"/>
        <path d="M535 120L600 100 690 190 640 240 555 150z" fill="#555"/>
        <path d="M555 160L640 135 690 200 600 250z" fill="#777"/>
        <path d="M305 190L530 112 550 150 310 235z" fill="#5a5a5a"/>
        <path d="M340 240L550 150 560 190 365 260z" fill="#b4b4b4"/><path d="M362 262L560 190 562 222 365 290z" fill="#9c9c9c"/>
        <path d="M320 215L540 135" class="thick"/><path d="M365 262L560 195" class="thick"/>
        <path d="M350 300Q430 260 470 340L420 380 330 360z" fill="#1f1f1f"/>
        <path d="M460 250L550 360 800 650 760 680 555 440z" fill="#474747"/>
        <path d="M490 240L560 225 810 505 800 560 770 610 560 370z" fill="#9c9c9c"/>
        <path d="M508 240L760 560M530 235L790 545M545 230L800 530" class="thin"/>
        <path d="M585 250L630 245 805 440 860 560 790 560z" fill="#a2a2a2"/>
        <path d="M600 255L820 510M615 250L830 490" class="thick"/>
        <path d="M750 560L860 545 960 660 880 700z" fill="#999"/><path d="M775 570L880 690M800 560L905 680" class="thick"/>
        <path d="M455 350L510 335 525 360 470 390z" fill="#bbb"/><ellipse cx="486" cy="344" rx="9" ry="5" fill="#777"/>
        <path d="M505 385L560 440 590 450 540 480z" fill="#9f9dac"/>
        <path d="M225 430L270 395 430 345 455 370 540 450 420 490 250 510z" fill="#262626"/><path d="M300 390L430 350 450 440 330 470z" fill="#333"/>
        <path d="M245 470l50-20 30 40-60 30z" fill="#1a1a1a"/><path d="M410 380l40-10v30l-35 10z" fill="#222"/>
        <path d="M105 350L130 370 150 430 220 470 230 510 160 500 60 400z" fill="#959595"/><path d="M60 395L110 370 130 425 90 445z" fill="#5a5a5a"/><ellipse cx="90" cy="409" rx="10" ry="7" fill="#999"/>
        <path d="M130 370L200 380 240 400 210 450 170 440z" fill="#151515"/>
        <path d="M165 450L200 440 215 470 180 485z" fill="#aaa"/>
    </g>

    <!-- upper box and rear plate -->
    <g transform="translate(1000 290) scale(.3571 .38265)">
        <path d="M500 900L640 800 800 1000 808 1055 620 1108 480 1100z" fill="#3a3a3a"/>
        <path d="M215 330L250 215 680 85 800 200 800 320 415 440z" fill="#4a4a4a"/>
        <path d="M215 320L320 420 350 480 240 390z" fill="#444"/>
        <path d="M245 215L672 86 668 165 640 180 335 275 290 265z" fill="#c4a07c"/>
        <path d="M330 280L680 178 690 205 345 310z" fill="#777"/><path d="M335 295L685 190" class="light"/>
        <path d="M692 85L800 195 775 235 750 235 690 140z" fill="#a5834c"/>
        <path d="M310 315L650 206 692 212 762 285 395 398 330 350z" fill="#e9cd9b"/>
        <path class="grain" d="M340 335Q500 270 660 225M400 370Q560 290 700 260M430 380Q600 320 730 280M520 300q60-30 90-10t-60 25"/>
        <path d="M235 228L335 345 310 382 250 310z" fill="#b3915c"/>
        <path d="M400 402L790 285 800 320 415 440z" fill="#555"/><path d="M410 415L795 300" class="light"/>
        <path d="M415 440L800 320 808 372 450 492z" fill="#b9b9b9"/><path d="M430 450L800 335M445 478L800 360" class="bar"/>
        <path d="M470 500L848 375 853 508 560 602 500 545z" fill="#c4c2d0"/>
        <path d="M450 490L848 372 850 382 460 505z" fill="#aaa"/>
        <path d="M550 605L860 508 872 525 565 635z" fill="#777"/>
        <path d="M565 635L820 552 820 608 610 680z" fill="#8d8d8d"/><path d="M575 650L820 568M590 665L820 585" class="thick"/>
        <path d="M820 552L868 530 990 665 930 695 820 600z" fill="#9a9a9a"/><path d="M840 550L950 680M855 540L970 672" class="thin"/>
        <path d="M605 690L820 610 905 700 690 775 640 745z" fill="#484848"/>
        <path d="M715 300l65-20 15 20-60 22z" fill="#bbb"/><path d="M385 412l35-15 20 15-35 15z" fill="#ccc"/><path d="M285 275l35-8 15 15-30 10z" fill="#bbb"/><path d="M610 185l40-15 20-50v50l-15 15-35 10z" fill="#c6c5cf"/><path d="M690 125l12 5v25l20 35-8 15-24-35z" fill="#c6c5cf"/><path d="M770 235l15 5v35l-20 5z" fill="#999"/>
        <g class="holes"><ellipse cx="422" cy="307" rx="6" ry="4"/><ellipse cx="571" cy="259" rx="6" ry="4"/><ellipse cx="623" cy="320" rx="6" ry="4"/><ellipse cx="475" cy="369" rx="6" ry="4"/><ellipse cx="601" cy="478" rx="8" ry="7"/><ellipse cx="500" cy="510" rx="9" ry="7"/><ellipse cx="548" cy="578" rx="8" ry="7"/><ellipse cx="668" cy="528" rx="12" ry="10"/><ellipse cx="724" cy="510" rx="12" ry="10"/><ellipse cx="754" cy="520" rx="8" ry="6"/><ellipse cx="800" cy="403" rx="4" ry="4"/><ellipse cx="505" cy="550" rx="15" ry="14"/></g>
        <g class="holes pale"><ellipse cx="617" cy="598" rx="8" ry="6"/><ellipse cx="674" cy="581" rx="8" ry="6"/><ellipse cx="730" cy="563" rx="8" ry="6"/><ellipse cx="786" cy="545" rx="8" ry="6"/><ellipse cx="843" cy="525" rx="8" ry="6"/></g>
        <ellipse cx="586" cy="528" rx="34" ry="26" fill="#999"/><ellipse cx="592" cy="525" rx="20" ry="20" fill="#ddd"/><path d="M560 530q25-30 50-15" class="thick"/><path d="M610 540l20-5 14 25-20 8z" fill="#687478"/>
        <path d="M345 365L358 366 628 708 600 738 345 430z" fill="#b8955c"/>
        <path d="M345 365L620 715" class="woodedge"/>
        <!-- motor -->
        <path d="M250 470l20-8v30h-15z" fill="#8aa0a8"/>
        <path d="M270 490Q260 465 300 448 335 440 350 452L500 625 410 668 380 660 275 515z" fill="url(#gMotor)"/>
        <path d="M275 500Q285 455 350 455M290 530Q320 490 375 490M345 600Q350 560 430 545" class="thin"/>
        <path d="M350 610Q350 565 440 553" class="steel"/><path d="M268 480Q290 450 340 446" class="steel"/>
        <path d="M403 655L515 622 535 635 535 700 520 650 410 680z" fill="#666"/><path d="M420 670L530 640 535 760 440 790z" fill="#b9b9b9"/>

        <!-- lower box -->
        <path d="M540 750L600 735 650 790 760 920 810 1055 760 1065 700 1010z" fill="#3f3f3f"/><path d="M555 750L770 1040M575 745L760 960" class="light"/>
        <path d="M690 775L1110 640 1200 740 1260 735 1260 830 800 950 640 790z" fill="#4e4e4e"/>
        <path d="M735 785L1110 668 1120 690 740 808z" fill="#8d8d8d"/><path d="M735 772L1100 655" class="light"/>
        <path d="M718 822L1100 697 1140 702 1178 745 780 878z" fill="#e9cd9b"/>
        <path class="grain" d="M760 840Q920 760 1100 715M780 860Q980 780 1150 735"/>
        <path d="M1140 570L1265 700 1240 735 1205 742 1140 650z" fill="#a88650"/>
        <path d="M640 735L762 880 735 925 700 900 640 800z" fill="#b3915c"/>
        <path d="M790 884L1262 735 1250 790 1180 835 900 940 815 950z" fill="#dcb389"/>
        <path class="grain" d="M830 930Q1000 850 1230 770M820 900Q1000 850 1240 750M860 935Q1050 860 1200 815"/>
        <path d="M785 880L1262 728" class="woodedge"/>
        <path d="M880 945L1250 815 1258 830 810 975 810 958z" fill="#777"/>
        <path d="M808 972L1258 828 1268 890 810 1050z" fill="#bdbdbd"/><path d="M808 992L1262 845M808 1026L1265 878" class="bar"/>
        <path d="M1030 665l65-20 20 20-60 20z" fill="#c4c4c4"/><path d="M680 780l40-18 22 18-35 15z" fill="#c4c4c4"/><path d="M1090 600l25-8v60l-25 8z" fill="#888"/><path d="M1130 610l15 5v35l30 40-6 15-38-35z" fill="#c9c8d4"/><path d="M1180 835l40-20 35-60v50l-20 18z" fill="#d4d3df"/><path d="M635 780l15 5v30l30 45-6 15-38-45z" fill="#d4d3df"/><path d="M808 920l12 30 55-5-15 10-52 22z" fill="#d4d3df"/>
        <g class="holes"><ellipse cx="839" cy="812" rx="6" ry="4"/><ellipse cx="1000" cy="757" rx="6" ry="4"/></g>
    </g>

    <!-- wheel, cross rails and brackets -->
    <g transform="translate(880 400) scale(.3333)">
        <path d="M940 740L1000 715 1070 790 1080 840 1000 870 860 920 740 820z" fill="#a9a7b6"/><path d="M940 760L1060 725M1000 870L1090 845M760 830L880 790" class="rail"/>
        <g class="holes"><ellipse cx="1030" cy="775" rx="13" ry="10"/><ellipse cx="1060" cy="785" rx="8" ry="8"/><ellipse cx="850" cy="860" rx="11" ry="9"/><ellipse cx="972" cy="803" rx="10" ry="8"/></g>
        <path d="M460 990Q490 900 600 855L700 820Q850 800 885 950L880 1000 540 1080z" fill="#2b2b2b"/>
        <path d="M500 1000Q560 890 700 865 830 845 860 905" class="tyre"/>
        <path d="M530 1060Q600 920 740 900 850 885 875 950" class="tread"/><path d="M530 1060Q600 920 740 900 850 885 875 950" class="tread2"/>
        <path d="M560 1080Q640 960 760 950 850 945 870 980L850 1010z" fill="#1c1c1c"/>
        <path d="M245 770L300 750 400 850 350 900 310 860z" fill="#8c8c8c"/>
        <path d="M430 895L850 735 858 775 450 918z" fill="#cac8c4"/><path d="M470 865L850 735" class="bar"/>
        <path d="M665 695L885 625 915 662 922 700 850 745 670 790z" fill="#5c5c5c"/><path d="M670 735L900 655" class="light"/><path d="M670 745L905 665" class="thick"/>
        <path d="M310 820L430 795 450 835 430 865 350 890 330 870z" fill="#5a5a5a"/><path d="M330 860L448 822" class="pale-line"/>
        <path d="M828 785L860 775 955 800 1025 892 1025 930 950 970z" fill="#a4a4a4"/><path d="M900 825L975 920M860 790L950 910" class="thick"/>
        <path d="M855 706L915 686 960 795 900 822z" fill="#4f4f4f"/><path d="M866 712L910 700 915 745 880 755z" fill="#b9bdc6"/><path d="M895 820L960 797 960 805 900 828z" fill="#ccd5da"/><ellipse cx="893" cy="731" rx="9" ry="8" fill="#ddd"/><ellipse cx="911" cy="781" rx="10" ry="8" fill="#999"/>
        <use href="#exend" x="944" y="888" width="84" height="85"/><use href="#exdark" x="930" y="670" width="85" height="56"/>
        <path d="M890 580L940 570 1000 650 1000 690 950 700z" fill="#999"/><path d="M905 590L975 680" class="thick"/><path d="M835 600l50-15 25 25-45 15z" fill="#bbb"/><path d="M920 608l32-12 8 12-28 14z" fill="#eee"/>
        <!-- sprocket and chains -->
        <path d="M340 560Q400 500 545 508 590 520 585 600L560 615 380 590z" fill="#c0c0bb"/>
        <path d="M560 515Q585 550 585 605" class="teeth"/>
        <path d="M345 530Q390 490 480 475L790 455 930 450" class="chain-a"/><path d="M345 530Q390 490 480 475L790 455 930 450" class="chain-b"/>
        <path d="M350 550Q390 515 500 498L800 478 905 448" class="chain-c"/><path d="M350 550Q390 515 500 498L800 478 905 448" class="chain-d"/><path d="M350 550Q390 515 500 498L800 478 905 448" class="chain-e"/>
        <path d="M620 635Q720 600 850 530" class="chain-a"/><path d="M620 635Q720 600 850 530" class="chain-b"/>
        <path d="M655 650Q740 610 960 495L925 470" class="chain-c"/><path d="M655 650Q740 610 960 495L925 470" class="chain-d"/><path d="M655 650Q740 610 960 495L925 470" class="chain-e"/>
        <path d="M312 740Q360 775 420 755" class="chain-c"/><path d="M312 740Q360 775 420 755" class="chain-d"/><path d="M312 740Q360 775 420 755" class="chain-e"/>
        <path d="M870 495l20-12 22 8 2 22-18 12-20-8z" fill="#9bb4c0"/><circle cx="899" cy="510" r="6" fill="#567"/>
    </g>

    <!-- front side plate -->
    <g transform="translate(1000 290) scale(.3571 .38265)">
        <path d="M160 1225L545 1105 760 1035 760 1062 150 1270z" fill="#585858"/>
        <path d="M30 1160L95 1148 160 1222 160 1272 95 1290 85 1240 0 1135z" fill="#a6a6a6"/><path d="M60 1160L130 1235M75 1155L145 1228" class="thick"/>
        <path d="M8 1062L62 1045 102 1140 42 1160z" fill="#4f4f4f"/><path d="M20 1065L60 1052 65 1090 35 1100z" fill="#b9bdc6"/><path d="M42 1155L102 1138 102 1146 45 1165z" fill="#ccd5da"/><ellipse cx="42" cy="1080" rx="9" ry="8" fill="#ddd"/><ellipse cx="59" cy="1124" rx="9" ry="7" fill="#999"/>
        <path d="M92 1288L620 1108 808 1052 1270 897 1270 985 108 1390z" fill="url(#gFace)"/>
        <use href="#exend" x="84" y="1220" width="80" height="75"/><use href="#exend" x="545" y="1065" width="78" height="70"/><use href="#exdark" x="758" y="990" width="52" height="74"/><use href="#exdark" x="1258" y="820" width="52" height="70"/><use href="#exdark" x="798" y="300" width="50" height="80"/>
        <path d="M105 1386L1265 982 1296 1016 118 1426z" fill="#4e4e4e"/>
        <path d="M140 1403L1262 1010" class="rivets"/><path d="M140 1403L1262 1010" class="rivets2"/>
        <path d="M190 1249L530 1133" class="rivets"/><path d="M190 1249L530 1133" class="rivets2"/><path d="M643 1090L720 1068" class="rivets"/>
        <path d="M158 1418L1258 1036 1266 1096 890 1232 570 1345 190 1476z" fill="#b4b4b4"/><path d="M175 1428L1262 1056M185 1452L1265 1076" class="bar"/>
        <path d="M158 1418l22 0 10 55-12-10z" fill="#333"/>
        <g class="holes"><ellipse cx="577" cy="1201" rx="9" ry="7"/><ellipse cx="615" cy="1175" rx="9" ry="7"/><ellipse cx="695" cy="1152" rx="9" ry="7"/><ellipse cx="749" cy="1126" rx="13" ry="10"/><ellipse cx="786" cy="1128" rx="10" ry="8"/><ellipse cx="829" cy="1098" rx="13" ry="10"/><ellipse cx="857" cy="1105" rx="9" ry="7"/><ellipse cx="896" cy="1074" rx="13" ry="10"/><ellipse cx="942" cy="1066" rx="10" ry="7"/><ellipse cx="1071" cy="1011" rx="12" ry="9"/><ellipse cx="1131" cy="989" rx="12" ry="10"/><ellipse cx="1162" cy="998" rx="8" ry="6"/><ellipse cx="1215" cy="992" rx="4" ry="4"/><ellipse cx="1095" cy="1034" rx="4" ry="4"/><ellipse cx="116" cy="1363" rx="9" ry="6"/></g>
        <ellipse cx="984" cy="1014" rx="34" ry="24" fill="#222"/><path d="M965 1025q15-30 40-28" class="light"/>
        <path d="M1005 1025l30-8 18 8-15 15z" fill="#aaa"/><ellipse cx="1024" cy="1040" rx="18" ry="13" fill="#e9e8f6"/>
        <ellipse cx="348" cy="1270" rx="40" ry="30" fill="#555"/><ellipse cx="348" cy="1270" rx="31" ry="23" fill="#aaa"/><ellipse cx="348" cy="1271" rx="24" ry="18" fill="#444"/><ellipse cx="349" cy="1271" rx="16" ry="12" fill="#ddd"/>
        <use href="#post" x="196" y="203" width="70" height="118"/>
        <use href="#post" x="652" y="58" width="72" height="118"/>
        <use href="#post" x="774" y="187" width="72" height="118"/>
        <use href="#post" x="303" y="338" width="72" height="105"/>
        <use href="#post" x="1092" y="538" width="80" height="122"/>
        <use href="#post" x="1238" y="693" width="80" height="135"/>
        <use href="#post" x="597" y="707" width="74" height="120"/>
        <use href="#post" x="726" y="868" width="78" height="135"/>
    </g>

    <!-- front skirt, bucket and arms -->
    <g transform="translate(540 300) scale(.3571 .38265)">
        <path d="M930 665L985 625 1100 700 1010 850 948 752z" fill="#3b3b3b"/><path d="M985 640L1025 820" class="thin"/>
        <path d="M975 625L1050 600 1120 700 1090 720z" fill="#909090"/><path d="M1010 618L1095 705" class="thick"/>
        <path d="M1100 1002L1205 925 1365 1225 1405 1488 1275 1292z" fill="url(#gDark)"/><path d="M1238 1020L1275 1290" class="thin"/>
        <path d="M1190 925L1235 900 1300 1050 1365 1225z" fill="#9a9a9a"/><path d="M1250 1060L1360 1230" class="slots"/>
        <path d="M1365 1218L1378 1222 1408 1486 1402 1488z" fill="#d8d8d8"/>
        <!-- rear arm -->
        <path d="M708 675L745 670 775 720 740 735z" fill="#999"/>
        <path d="M736 722L772 716 828 745 788 808z" fill="#8d8d8d"/>
        <path d="M940 434L1290 508 1237 592 1120 600 1052 570 985 628 830 746 765 736z" fill="url(#gArm)"/>
        <path d="M905 388L1285 474 1292 508 960 440 935 434z" fill="#8f8f8f"/><path d="M918 398L962 412 985 440 940 432z" fill="#ededed"/>
        <path d="M905 388L935 434 770 720 734 720 745 672z" fill="url(#gEdge)"/><path d="M920 420L760 716" class="thin"/>
        <path d="M935 550L985 562 878 650z" fill="#b4b4b4"/><path d="M965 562L985 562 878 650z" fill="#777"/><path d="M1105 473L1052 570M775 722L830 735" class="thin"/>
        <ellipse cx="1183" cy="548" rx="66" ry="54" class="hub"/><ellipse cx="1186" cy="546" rx="34" ry="27" fill="#c9c8d6"/><ellipse cx="1188" cy="548" rx="22" ry="18" fill="#888"/>
        <path d="M1172 560L1190 542 1206 545 1295 690 1270 712z" fill="#6a6a6a"/><path d="M1172 560L1186 550 1282 700 1270 712z" fill="#d8d8d8"/>
        <!-- near arm -->
        <path d="M895 995L930 985 960 1040 920 1050z" fill="#b9b9b9"/>
        <path d="M1140 750L1495 806 1420 880 1325 900 1255 888 1205 932 1020 1058 953 1048z" fill="url(#gArm)"/>
        <path d="M1105 698L1488 775 1495 806 1165 750 1132 746z" fill="#8f8f8f"/><path d="M1118 708L1162 722 1186 750 1140 744z" fill="#ededed"/>
        <path d="M1105 698L1134 746 956 1044 914 1036 932 985z" fill="url(#gEdge)"/><path d="M1120 730L945 1035" class="thin"/>
        <path d="M1132 868L1190 878 1072 968z" fill="#b4b4b4"/><path d="M1165 874L1190 878 1072 968z" fill="#777"/><path d="M1310 785L1255 888" class="thin"/>
        <ellipse cx="1395" cy="850" rx="68" ry="52" class="hub"/><ellipse cx="1400" cy="850" rx="36" ry="28" fill="#c9c8d6"/>
        <!-- bucket -->
        <path d="M103 788L708 675 920 1050 283 1183z" fill="#5e5e5e"/>
        <path d="M283 1185L950 1042 1015 1060 890 1264z" fill="#bababa"/>
        <path d="M283 1183L955 1040" class="thick"/><path d="M283 1189L920 1053" class="thin"/><path d="M953 1048L1020 1058 1010 1070 950 1060z" fill="#bbb"/>
        <g class="holes"><ellipse cx="476" cy="1165" rx="7" ry="5"/><ellipse cx="651" cy="1129" rx="7" ry="5"/><ellipse cx="824" cy="1093" rx="7" ry="5"/><ellipse cx="694" cy="1218" rx="7" ry="5"/><ellipse cx="926" cy="1156" rx="9" ry="7"/><ellipse cx="874" cy="1240" rx="9" ry="7"/><ellipse cx="978" cy="1072" rx="8" ry="6"/>
            <ellipse cx="941" cy="466" rx="8" ry="7"/><ellipse cx="1010" cy="464" rx="8" ry="7"/><ellipse cx="1070" cy="477" rx="8" ry="7"/><ellipse cx="897" cy="544" rx="8" ry="7"/><ellipse cx="963" cy="546" rx="8" ry="7"/><ellipse cx="1023" cy="557" rx="8" ry="7"/><ellipse cx="852" cy="624" rx="8" ry="7"/><ellipse cx="808" cy="700" rx="8" ry="7"/><ellipse cx="792" cy="748" rx="8" ry="6"/>
            <ellipse cx="1143" cy="781" rx="8" ry="7"/><ellipse cx="1215" cy="777" rx="8" ry="7"/><ellipse cx="1276" cy="789" rx="8" ry="7"/><ellipse cx="1093" cy="862" rx="8" ry="7"/><ellipse cx="1163" cy="860" rx="8" ry="7"/><ellipse cx="1227" cy="872" rx="8" ry="7"/><ellipse cx="1044" cy="943" rx="8" ry="7"/><ellipse cx="995" cy="1022" rx="8" ry="7"/></g>
    </g>

    <!-- bearing block -->
    <g transform="translate(880 400) scale(.3333)">
        <path d="M418 685L615 617 640 645 655 680 465 745 440 730z" fill="#98a0a2"/><path d="M418 685L615 617 622 628 430 700z" fill="#5b3226"/><path d="M430 700L622 628 632 642 440 715z" fill="#6a5a56"/>
        <path d="M418 685L440 712 475 862 440 810z" fill="#333"/><path d="M442 735L465 745 480 862z" fill="#c8d2da"/>
        <path d="M450 738L650 675 662 690 465 755z" fill="#cfdde2"/><path d="M465 755L660 690 668 795 480 862z" fill="#9aa5b8"/>
        <ellipse cx="541" cy="785" rx="40" ry="34" fill="#c9ccd2"/><ellipse cx="541" cy="785" rx="30" ry="25" fill="#444"/><circle cx="577" cy="727" r="9" fill="#ccd"/>
        <path d="M515 775L545 757 592 820 560 843z" fill="#666"/><path d="M515 775L530 764 575 832 560 843z" fill="#eee"/><circle cx="574" cy="832" r="17" fill="#ddd"/><circle cx="572" cy="834" r="4" fill="#777"/>
    </g>

    <!-- view cube -->
    <g class="view-cube">
        <path d="M1791 971L1838 954 1858 983 1808 1003z" fill="#fdfefe"/><path d="M1808 1003L1858 983 1861 1018 1816 1037z" fill="#e9ebeb"/><path d="M1791 971L1808 1003 1816 1037 1802 1006z" fill="#f6f8f8"/>
        <path d="M1827 995L1820 981" class="axis-z"/><path d="M1827 995l3 15" class="axis-x"/><path d="M1827 995l-20 7" class="axis-y"/><circle cx="1827" cy="995" r="2" fill="#d8b830"/>
        <text x="1812" y="985" transform="rotate(-18 1812 985)">LEFT</text><text x="1832" y="991" transform="rotate(80 1832 991)">BOTTOM</text>
    </g>
</svg>
            </div>
        </div>
    </div>
    <aside class="rail-tabs">
        <button><svg viewBox="0 0 20 20"><path d="M1 4l8-3 5 3v12l-8 3-5-3z" fill="url(#gOrange)" stroke="#555"/><path d="M9 9h5v5h5v5H9z" fill="#eee" stroke="#444"/></svg></button>
        <button><svg viewBox="0 0 20 20"><path d="M1 14h5v5H1zM6 14h4v5H6zM1 9h5v5H1zM7 8h4v4H7zM11 8h4v4h-4zM9 4h4v4H9zM14 1h3v4h-3zM14 5h5v4h-5z" fill="#e8f6fa" stroke="#246c86"/></svg></button>
        <button><svg viewBox="0 0 20 20"><path d="M3 18L14 6" stroke="#e87d0d" stroke-width="3"/><path d="M1 3q5-3 9 1l-3 4-2-2-4 1z" fill="#666"/><path d="M8 8l5 5" stroke="#666" stroke-width="2.500"/><path d="M13 8v10l2-2 2 4 1-1-1-3h3z" fill="#fff" stroke="#222"/></svg></button>
        <button><svg viewBox="0 0 20 20"><path d="M2 2h16v16H2z" fill="url(#gHeat)" stroke="#444"/></svg></button>
        <button><svg viewBox="0 0 20 20"><circle cx="14" cy="6" r="4.500" fill="#eee" stroke="#bbb"/><circle cx="5" cy="16" r="3" fill="#eee" stroke="#bbb"/><path d="M6 12l5-5M8 16l6-5" stroke="#bbb"/></svg></button>
        <button><svg viewBox="0 0 20 20"><path d="M1 14l9-4 9 4-9 5zM1 10l9-4 9 4-9 5zM1 6l9-5 9 5-9 5z" fill="#eee" stroke="#555"/></svg></button>
        <button><svg viewBox="0 0 20 20"><path d="M1 1h18v18H1z" fill="#fff" stroke="#1a2f8c"/><circle cx="9" cy="9" r="5" fill="#39a9d8" stroke="#15508c" stroke-width="2" stroke-dasharray="2 1"/><circle cx="9" cy="9" r="2" fill="#fff" stroke="#15508c"/><path d="M17 4v8M15 5h4M15 11h4M4 16h10" stroke="#123"/></svg></button>
        <button class="named"><svg viewBox="0 0 20 20"><path d="M1 2h18v16H1z" fill="#e4e4e4" stroke="#333"/><circle cx="6" cy="7" r="2" fill="#e8641c" stroke="#a44"/><circle cx="14" cy="7" r="2" fill="#f4b51c" stroke="#a73"/><circle cx="6" cy="13" r="2" fill="#fff" stroke="#555"/><circle cx="14" cy="13" r="2" fill="#4ab0cc" stroke="#256"/></svg><span>樣式板</span></button>
        <button class="apart"><svg viewBox="0 0 20 20"><path d="M8 1h11v11H8z" fill="#e8e8e8" stroke="#333"/><path d="M11 3v7M15 3v7" stroke="#444"/><path d="M0 7h6v6H0zM8 13h6v6H8z" fill="#f39a2a" stroke="#c76a10"/><path d="M4 13v6M4 16h4" stroke="#333"/></svg></button>
    </aside>
</main>

<footer class="status">
    <p>選取了 0 項</p>
    <div class="status-tools">
        <button><svg><use href="#winlens"/></svg></button>
        <button><svg><use href="#zoom"/></svg></button>
        <button><svg><use href="#smallfit"/></svg></button>
        <button><svg><use href="#pan"/></svg></button>
        <button><svg><use href="#rot"/></svg></button>
        <button><svg viewBox="0 0 16 16"><path d="M2 8l6-5v3h5v4H8v3zM7 12l4-3v5z" fill="#ddd" stroke="#555"/><path d="M9 15l3-4 3 4z" fill="#e0660c"/></svg></button>
        <button><svg><use href="#v1"/></svg></button>
        <button><svg viewBox="0 0 16 16"><path d="M1 1h10v10H1z" fill="#eee" stroke="#888"/><path d="M5 6h10v9H5z" fill="url(#gOrange)" stroke="#b9660e"/></svg></button>
        <button><svg><use href="#persp"/></svg></button>
        <button class="minus"><svg viewBox="0 0 16 16"><circle cx="8" cy="8" r="7" fill="#fff"/><path d="M4 8h8" stroke="#e0660c" stroke-width="1.5"/></svg></button>
        <input type="range" min="0" max="100" value="39" aria-label="縮放">
        <button class="plus"><svg viewBox="0 0 16 16"><circle cx="8" cy="8" r="7" fill="#fff"/><path d="M4 8h8M8 4v8" stroke="#e0660c" stroke-width="1.5"/></svg></button>
        <button><svg viewBox="0 0 16 16"><rect y="3" width="16" height="11" rx="2" fill="#f01414"/><path d="M7 6v5l4-2.500z" fill="#fff"/></svg></button>
        <button class="rec"><svg viewBox="0 0 16 16"><circle cx="8" cy="8" r="7" fill="#eee"/><circle cx="8" cy="8" r="4" fill="#444"/><circle cx="8" cy="8" r="2.500" fill="#e01414"/></svg></button>
        <button><svg viewBox="0 0 16 16"><rect x="1" y="1" width="14" height="14" rx="2" fill="#fff"/><path d="M4 13h8M8 11V4M5 7l3-3 3 3" fill="none" stroke="#d22" stroke-width="1.3"/></svg></button>
    </div>
</footer>

</body>
</html>
```
FILE: styles.css
```
* {
    box-sizing: border-box;
}
body {
    margin: 0;
    height: 100vh;
    display: flex;
    flex-direction: column;
    overflow: hidden;
    font-family: "Liberation Serif", "Noto Sans CJK TC", serif;
    font-size: 13px;
    line-height: 16px;
    color: #000;
    background: #fff;
}
h1, h2, h3, p, ul {
    margin: 0;
    padding: 0;
    font-size: 13px;
    font-weight: normal;
}
button {
    display: flex;
    align-items: center;
    justify-content: center;
    padding: 0;
    border: 0;
    background: none;
    font: inherit;
    color: inherit;
    white-space: nowrap;
}
input, select {
    font: inherit;
    color: inherit;
    min-width: 0;
}
.defs {
    position: absolute;
}

/* title bar */
.titlebar {
    flex: none;
    height: 28px;
    display: grid;
    grid-template-columns: 1fr auto 1fr;
    align-items: center;
    color: #fff;
    background: linear-gradient(90deg, #006487 50%, #13749a 64%, #539fb9 98%);
}
.titlebar h1 {
    padding-top: 3px;
    font-size: 12px;
}
.quick {
    display: flex;
    align-items: center;
    padding-left: 6px;
}
.quick button {
    width: 23px;
    height: 24px;
}
.quick button svg {
    width: 17px;
    height: 17px;
}
.quick .drop {
    width: 9px;
}
.quick .drop svg {
    width: 8px;
    height: 8px;
}
.logo {
    width: 24px;
    height: 24px;
    margin-right: 22px;
    border: 1px solid #c8d4f0;
    background: #2a48a8;
    font: bold 12px/24px "Open Sans", sans-serif;
    text-align: center;
}
.window-buttons {
    display: flex;
    justify-content: flex-end;
    align-items: center;
    padding-top: 2px;
}
.window-buttons button {
    width: 31px;
    height: 24px;
}
.window-buttons svg {
    width: 11px;
    height: 11px;
}
.brand {
    margin-right: 6px;
    font: bold 11px/16px "Open Sans", sans-serif;
}

/* ribbon tabs */
.tabs {
    flex: none;
    height: 26px;
    display: flex;
    align-items: flex-end;
    color: #fff;
    background: linear-gradient(90deg, #006487 50%, #13749a 64%, #539fb9 98%);
}
.tabs a {
    height: 24px;
    padding: 5px 1px 0;
    margin: 0 14px 0 13px;
    color: #fff;
    text-decoration: none;
    white-space: nowrap;
}
.tabs a.file {
    margin-left: 8px;
    padding-top: 4px;
    margin-right: 13px;
}
.tabs a.active {
    margin: 0;
    padding: 5px 14px 0;
    color: #ffc83c;
    background: linear-gradient(#ffc83c, #ffc83c) bottom 1px left / 100% 2px no-repeat;
}
.tabs-right {
    margin-left: auto;
    display: flex;
    align-items: center;
}
.tabs-right button {
    width: 16px;
    height: 24px;
}
.tabs-right button svg {
    width: 10px;
    height: 10px;
}
.tabs-right .face {
    width: 23px;
}
.tabs-right .face svg {
    width: 16px;
    height: 16px;
}
.tool-search {
    display: flex;
    align-items: center;
    width: 132px;
    height: 22px;
    margin-right: 46px;
    background: #fff;
    border: 1px solid #a0a0a0;
}
.tool-search input, .part-search input {
    flex: 1;
    border: 0;
    padding: 0 3px;
    outline: 0;
    background: none;
}
.tool-search input::placeholder {
    color: #000;
}
.tool-search svg, .part-search svg {
    width: 13px;
    height: 13px;
    margin-right: 2px;
}

/* ribbon */
.ribbon {
    flex: none;
    height: 94px;
    display: flex;
    padding-top: 4px;
    border-top: 1px solid #ccc;
    border-bottom: 1px solid #ccc;
    background: #fff;
}
.group {
    display: flex;
    flex-direction: column;
    background: linear-gradient(#d8d8d8, #d8d8d8) right 2px / 1px 80px no-repeat;
}
.group .body {
    display: flex;
    align-items: flex-start;
    height: 66px;
}
.group h2 {
    height: 16px;
    text-align: center;
}
.big {
    flex-direction: column;
    padding: 2px 0 0;
}
.big svg {
    width: 32px;
    height: 32px;
    margin-bottom: 8px;
}
.big svg.dd, .wide svg.dd {
    width: 7px;
    height: 7px;
    margin: 2px 0 0;
}
button:disabled {
    color: #a8a8a8;
}
.on {
    background: #cce8f0;
    outline: 1px solid #bcd4ee;
    outline-offset: -1px;
}
.g-show .body {
    padding: 0 3px 0 5px;
}
.g-show .big {
    width: 46px;
}
.g-show .small {
    width: 24px;
    height: 24px;
}
.g-show .small svg {
    width: 18px;
    height: 18px;
}
.g-clip .body {
    padding: 0 4px 0 5px;
}
.g-clip .big {
    width: 56px;
}
.g-clip .big + .big {
    width: 46px;
}
.g-views .body {
    padding: 0 8px 0 4px;
}
.gallery {
    display: grid;
    grid-template-columns: repeat(3, 33px);
    grid-auto-rows: 33px;
}
.gallery svg {
    width: 22px;
    height: 22px;
}
.scroller {
    margin-left: 6px;
    width: 17px;
    border: 1px solid #a8a8a8;
}
.scroller button {
    width: 100%;
    height: 20px;
    color: #555;
    border-top: 1px solid #a8a8a8;
}
.scroller .up {
    border-top: 0;
    color: #ccc;
}
.scroller svg {
    width: 7px;
    height: 7px;
}
.scroller .up svg {
    transform: rotate(180deg);
}
.scroller .bar svg {
    border-top: 1px solid #555;
}
.g-orient .body {
    padding: 0 6px;
}
.g-orient .big:first-child {
    width: 56px;
}
.g-orient .big {
    width: 44px;
}
.grid {
    display: grid;
    grid-template-columns: repeat(3, 23px);
    grid-auto-rows: 23px;
}
.grid button {
    height: 23px;
}
.grid svg {
    width: 17px;
    height: 17px;
}
.g-style h2 {
    width: 428px;
}
.cubes {
    grid-template-columns: repeat(3, 32px);
    padding: 0 4px;
    margin-right: 2px;
    background: linear-gradient(#d8d8d8, #d8d8d8) right / 1px 100% no-repeat;
}
.cubes svg {
    width: 17px;
    height: 17px;
}
.cubes .picked {
    border: 4px solid #cce8f0;
}
.shading {
    grid-template-columns: 24px 34px 24px;
    padding-right: 2px;
    background: linear-gradient(#d8d8d8, #d8d8d8) right / 1px 100% no-repeat;
}
.shading button {
    width: 24px;
}
.shading .wide {
    width: 34px;
    gap: 4px;
}
.shading svg {
    width: 15px;
    height: 15px;
}
.rows {
    display: flex;
    flex-direction: column;
    width: 94px;
    padding-left: 6px;
}
.rows button, .picks button {
    justify-content: flex-start;
    height: 19px;
    gap: 2px;
    flex: none;
}
.rows svg, .picks button svg {
    width: 16px;
    height: 16px;
}
.picks {
    width: 142px;
}
.pick {
    display: flex;
    align-items: center;
    width: 138px;
    height: 23px;
    border: 1px solid #a0a0a0;
}
.pick svg {
    width: 15px;
    height: 15px;
    margin-left: 3px;
}
.pick.off {
    border-color: #ddd;
    color: #999;
}
.pick select {
    flex: 1;
    height: 21px;
    padding: 0 3px;
    border: 0;
    appearance: none;
    color: inherit;
    opacity: 1;
    text-spacing-trim: space-all;
    background-color: transparent;
    background-image: linear-gradient(45deg, transparent 50%, #777 50%),
                      linear-gradient(135deg, #777 50%, transparent 50%);
    background-position: right 6px center, right 3px center;
    background-size: 3px 3px, 3px 3px;
    background-repeat: no-repeat;
}
.picks button {
    height: 22px;
    padding-left: 4px;
}
.g-window .body {
    padding-left: 6px;
}
.g-window .big {
    width: 56px;
}
.g-window .big:nth-child(2) {
    width: 84px;
}
.g-window .big:nth-child(4) {
    width: 46px;
}
.g-window .last {
    width: 64px;
    border-left: 1px solid #ddd;
}

/* prompt bar and document tabs */
.work {
    flex: 1;
    min-height: 0;
    display: flex;
    background: #f9fbfb;
}
.desk {
    flex: 1;
    min-width: 0;
    display: flex;
    flex-direction: column;
}
.prompt {
    flex: none;
    display: flex;
    align-items: center;
    height: 25px;
    background: #fff;
    border-top: 1px solid #a0a0a0;
    border-bottom: 2px solid #d0d0d0;
    font-family: "Open Sans", "Noto Sans CJK TC", sans-serif;
}
.prompt button {
    width: 35px;
    height: 22px;
    background: #10789c;
}
.prompt button svg {
    width: 20px;
    height: 8px;
}
.prompt p {
    padding-left: 2px;
    flex: 1;
    white-space: nowrap;
    text-spacing-trim: space-all;
}
.grip {
    width: 16px;
    height: 22px;
    background: #f0f0f0;
}
.docs {
    flex: none;
    display: flex;
    justify-content: space-between;
    height: 31px;
    padding: 3px 0 0 2px;
    background: #fff;
    border-bottom: 1px solid #006487;
}
.doc-tab {
    display: flex;
    align-items: center;
    width: 220px;
    padding: 0 4px 0 17px;
    color: #e4eef2;
    background: #006487;
    font: 12px/16px "Open Sans", sans-serif;
    white-space: nowrap;
}
.doc-tab > svg {
    width: 16px;
    height: 16px;
    margin-right: 3px;
}
.doc-tab span {
    flex: 1;
}
.doc-tab button svg {
    width: 9px;
    height: 9px;
}
.doc-nav {
    display: flex;
    align-items: center;
    padding: 0 1px 3px 0;
}
.doc-nav button {
    width: 14px;
}
.doc-nav svg {
    width: 9px;
    height: 10px;
}

/* navigator */
.content {
    flex: 1;
    min-height: 0;
    display: flex;
}
.navigator {
    flex: none;
    width: 225px;
    display: flex;
    flex-direction: column;
    background: #fff;
    border: 1px solid #2455a0;
}
.navigator header {
    display: flex;
    align-items: center;
    height: 19px;
    padding: 0 5px;
    color: #dcebf0;
    background: #10789c;
}
.navigator header > svg {
    width: 20px;
    height: 18px;
    margin-right: 3px;
}
.navigator h3 {
    flex: 1;
}
.navigator header button {
    width: 18px;
}
.navigator header button svg {
    width: 9px;
    height: 9px;
}
.part-search {
    display: flex;
    align-items: center;
    height: 18px;
    margin: 4px 2px 0;
    border: 1px solid #e8e8e8;
    border-bottom: 1px solid #777;
    font-size: 12px;
}
.part-search input {
    padding: 0 2px;
}
.part-search input::placeholder {
    color: #555;
}
.part-search svg {
    width: 12px;
    height: 12px;
    margin-right: 5px;
}
.tree-box {
    display: flex;
    height: 678px;
    margin: 2px 2px 0;
}
.tree {
    flex: 1;
    min-width: 0;
    padding-top: 1px;
    overflow: hidden;
    list-style: none;
}
.tree li {
    display: flex;
    align-items: center;
    height: 18px;
    padding-left: 41px;
    white-space: nowrap;
}
.tree li.fold {
    padding-left: 29px;
}
.tree li.fold::before {
    content: "";
    width: 0;
    margin-right: 7px;
    border: 4px solid transparent;
    border-left: 5px solid #333;
    border-right: 0;
}
.tree li.latin {
    font-size: 12px;
}
.tree li.off {
    color: #888;
}
.tree svg {
    flex: none;
    width: 14px;
    height: 12px;
    margin-right: 4px;
}
.tree .ic {
    width: 17px;
    height: 17px;
    margin-right: 3px;
}
.tree .ic:first-child {
    width: 16px;
    height: 16px;
    margin-right: 2px;
}
.vbar {
    width: 16px;
    background: #f0f0f0;
    padding: 424px 7px 0;
}
.vbar span {
    display: block;
    height: 232px;
    background: #888;
}
.hbar {
    height: 13px;
    margin: 0 2px;
    padding: 5px 17px;
    background: #f0f0f0;
}
.hbar span {
    display: block;
    width: 91px;
    height: 2px;
    background: #888;
}
.note {
    padding: 5px 22px;
    text-spacing-trim: space-all;
}

/* 3D view */
.viewport {
    flex: 1;
    min-width: 0;
    background: #f9fbfb;
}
.model {
    display: block;
    width: 100%;
    height: 100%;
}
.model path, .model ellipse, .model circle {
    stroke: #262626;
    stroke-width: 1;
    vector-effect: non-scaling-stroke;
    stroke-linejoin: round;
}
.model .soft path {
    stroke: none;
}
.model .soft .band {
    fill: none;
    stroke: #dfe1e1;
    stroke-width: 5;
}
.model .soft .gleam {
    fill: none;
    stroke: #f8fafa;
    stroke-width: 3;
}
.model .thin, .model .thick, .model .light, .model .bar, .model .brown, .model .grain,
.model .woodedge, .model .steel, .model .rail, .model .pale-line {
    fill: none;
}
.model .thick {
    stroke-width: 2;
}
.model .light {
    stroke: #999;
}
.model .pale-line {
    stroke: #ccc;
    stroke-width: 3;
}
.model .bar {
    stroke: #222;
    stroke-width: 3;
}
.model .brown {
    stroke: #4a2418;
    stroke-width: 3;
}
.model .grain {
    stroke: #d6b27c;
}
.model .woodedge {
    stroke: #e4c48c;
    stroke-width: 2;
}
.model .steel {
    stroke: #b8ccd4;
    stroke-width: 3;
}
.model .rail {
    stroke: #333;
    stroke-width: 7;
}
.model .holes ellipse {
    fill: #555;
}
.model .holes.pale ellipse {
    fill: #aaa;
}
.model .hub {
    fill: #d3d2e2;
    stroke: #222;
    stroke-width: 2;
    stroke-dasharray: 9 2;
}
.model .tyre {
    fill: none;
    stroke: #3a3a40;
    stroke-width: 5;
}
.model .tread {
    fill: none;
    stroke: #050505;
    stroke-width: 15;
}
.model .tread2 {
    fill: none;
    stroke: #333;
    stroke-width: 9;
    stroke-dasharray: 1 6;
}
.model .teeth {
    fill: none;
    stroke: #222;
    stroke-width: 4;
    stroke-dasharray: 3 3;
}
.model .chain-a, .model .chain-b, .model .chain-c, .model .chain-d, .model .chain-e,
.model .rivets, .model .rivets2, .model .slots {
    fill: none;
    stroke-linecap: round;
}
.model .chain-a {
    stroke: #222;
    stroke-width: 9;
}
.model .chain-b {
    stroke: #9aa3a8;
    stroke-width: 7;
    stroke-dasharray: 0 11;
}
.model .chain-c {
    stroke: #222;
    stroke-width: 7;
}
.model .chain-d {
    stroke: #c8c8c4;
    stroke-width: 6;
    stroke-dasharray: 4 8;
}
.model .chain-e {
    stroke: #222;
    stroke-width: 3;
    stroke-dasharray: 0 6;
}
.model .rivets {
    stroke: #1c1c1c;
    stroke-width: 5;
    stroke-dasharray: 0 24;
}
.model .rivets2 {
    stroke: #999;
    stroke-width: 3;
    stroke-dasharray: 0 24;
}
.model .slots {
    stroke: #111;
    stroke-width: 3;
    stroke-dasharray: 1 7;
}
.model .view-cube path {
    stroke: #b0b4b4;
}
.model .view-cube .axis-x {
    stroke: #f08c8c;
}
.model .view-cube .axis-y {
    stroke: #4cc04c;
}
.model .view-cube .axis-z {
    stroke: #8c8cf0;
}
.view-cube text {
    font-size: 10px;
    fill: #555;
}

/* right edge tabs */
.rail-tabs {
    flex: none;
    width: 29px;
    padding-left: 7px;
    overflow: hidden;
}
.rail-tabs button {
    width: 22px;
    height: 34px;
}
.rail-tabs svg {
    width: 20px;
    height: 20px;
}
.rail-tabs .named {
    flex-direction: column;
    justify-content: flex-start;
    height: 120px;
    padding-top: 7px;
    gap: 2px;
}
.named span {
    writing-mode: vertical-rl;
    text-orientation: sideways;
    font-size: 12px;
}
.rail-tabs .apart {
    margin-top: 11px;
}

/* status bar */
.status {
    flex: none;
    display: flex;
    justify-content: flex-end;
    align-items: center;
    height: 20px;
    color: #fff;
    background: #006487;
    font-family: "Open Sans", "Noto Sans CJK TC", sans-serif;
}
.status p {
    width: 186px;
    font-size: 12px;
}
.status-tools {
    display: flex;
    align-items: center;
}
.status-tools button {
    width: 22px;
}
.status-tools svg {
    width: 16px;
    height: 16px;
}
.status-tools .minus, .status-tools .plus {
    width: 20px;
}
.status-tools .rec {
    width: 25px;
}
.status-tools input {
    width: 114px;
    height: 16px;
    margin: 0;
    appearance: none;
    background: linear-gradient(#fff, #fff) center / 100% 1px no-repeat;
}
.status-tools input::-webkit-slider-thumb {
    appearance: none;
    width: 7px;
    height: 11px;
    border-radius: 0 0 3px 3px;
    background: #fff;
}
```
